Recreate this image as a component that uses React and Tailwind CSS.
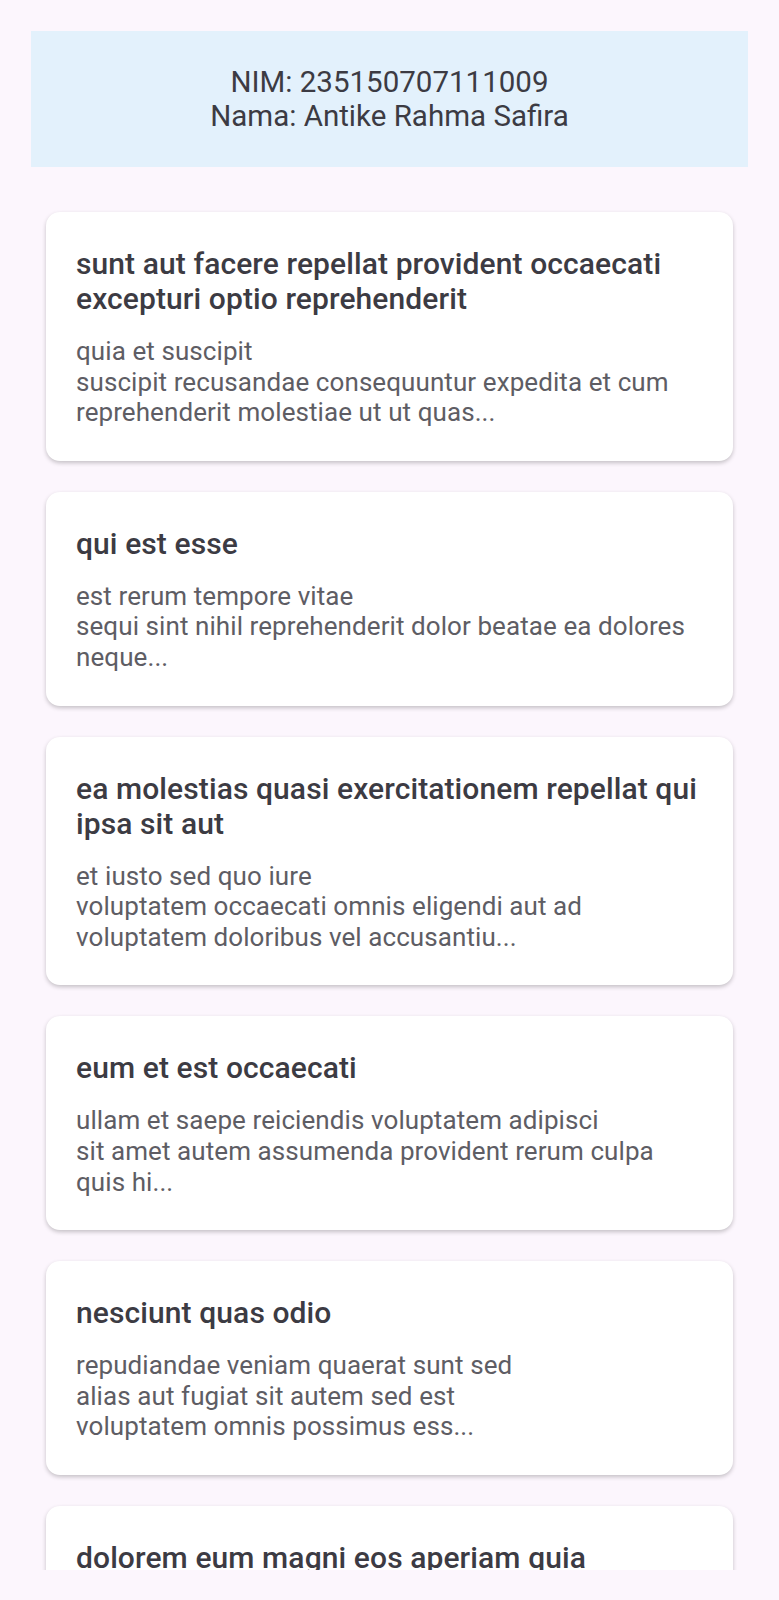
import React from "react";

const posts = [
  {
    title: ["sunt aut facere repellat provident occaecati", "excepturi optio reprehenderit"],
    body: ["quia et suscipit", "suscipit recusandae consequuntur expedita et cum", "reprehenderit molestiae ut ut quas..."],
  },
  {
    title: ["qui est esse"],
    body: ["est rerum tempore vitae", "sequi sint nihil reprehenderit dolor beatae ea dolores", "neque..."],
  },
  {
    title: ["ea molestias quasi exercitationem repellat qui", "ipsa sit aut"],
    body: ["et iusto sed quo iure", "voluptatem occaecati omnis eligendi aut ad", "voluptatem doloribus vel accusantiu..."],
  },
  {
    title: ["eum et est occaecati"],
    body: ["ullam et saepe reiciendis voluptatem adipisci", "sit amet autem assumenda provident rerum culpa", "quis hi..."],
  },
  {
    title: ["nesciunt quas odio"],
    body: ["repudiandae veniam quaerat sunt sed", "alias aut fugiat sit autem sed est", "voluptatem omnis possimus ess..."],
  },
  {
    title: ["dolorem eum magni eos aperiam quia"],
    body: ["ut aspernatur corporis harum nihil quis provident sequi", "mollitia nobis aliquid molestiae", "perspiciatis et ea nemo ab reprehenderit..."],
  },
];

function Card({ post }) {
  return (
    <div className="bg-white rounded-[14px] shadow-[0_2px_4px_rgba(0,0,0,0.22)] px-[30px] pt-[34px] pb-[33px]">
      <div className="text-[30px] leading-[35px] font-medium text-[#3c3b43] whitespace-nowrap tracking-[0.1px]">
        {post.title.map((l, i) => (
          <div key={i}>{l}</div>
        ))}
      </div>
      <div className="mt-[20px] text-[26px] leading-[30.6px] text-[#5e5d64] whitespace-nowrap tracking-[0.08px]">
        {post.body.map((l, i) => (
          <div key={i}>{l}</div>
        ))}
      </div>
    </div>
  );
}

export default function App() {
  return (
    <div className="w-[779px] h-[1600px] bg-[#fcf6fd] overflow-hidden" style={{ fontFamily: "Roboto, 'Noto Sans', sans-serif" }}>
      <div className="h-[1570px] overflow-hidden">
        <div className="pt-[31px] px-[31px]">
          <div className="bg-[#e3f1fc] py-[34px] text-center text-[29.5px] leading-[34px] text-[#3c3b43]">
            <div>NIM: 235150707111009</div>
            <div>Nama: Antike Rahma Safira</div>
          </div>
        </div>
        <div className="px-[46px] pt-[45px] flex flex-col gap-[31px]">
          {posts.map((p, i) => (
            <Card key={i} post={p} />
          ))}
        </div>
      </div>
    </div>
  );
}
